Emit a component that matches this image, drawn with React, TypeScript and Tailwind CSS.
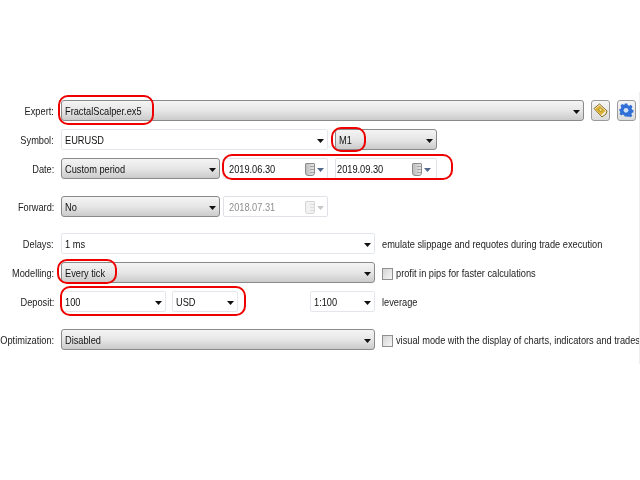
const font = "font-['Liberation_Sans',Arial,sans-serif]";

// the reference is a squeezed screenshot, so the text is narrowed rather than made smaller
function Text({ children, right }: { children: string; right?: boolean }) {
  return (
    <span className={`inline-block pt-[2px] scale-x-[.84] whitespace-nowrap ${right ? "origin-right" : "origin-left"}`}>
      {children}
    </span>
  );
}

function Caret({ color = "#111" }: { color?: string }) {
  return (
    <svg width="7" height="4" viewBox="0 0 7 4" className="shrink-0 mt-[2px]">
      <path d="M0 0h7L3.5 4z" fill={color} />
    </svg>
  );
}

function Label({ children }: { children: string }) {
  return (
    <div className="flex justify-end w-[54px] mr-[7px] shrink-0 text-[#222]">
      <Text right>{children}</Text>
    </div>
  );
}

// grey gradient combo, the read-only kind
function Select({ text, className }: { text: string; className: string }) {
  return (
    <div
      className={`flex shrink-0 items-center justify-between h-[21px] pl-[3px] pr-[3px] rounded-[3px] border border-[#8a8a8a] bg-gradient-to-b from-[#f4f4f4] via-[#e6e6e6] to-[#cbcbcb] text-[#111] ${className}`}
    >
      <Text>{text}</Text>
      <Caret />
    </div>
  );
}

// white editable combo
function Combo({ text, className }: { text: string; className: string }) {
  return (
    <div className={`flex shrink-0 items-center justify-between h-[21px] pl-[3px] pr-[3px] rounded-[2px] border border-[#e3e7ec] bg-white text-[#111] ${className}`}>
      <Text>{text}</Text>
      <Caret />
    </div>
  );
}

function DateBox({ text, disabled, className }: { text: string; disabled?: boolean; className: string }) {
  return (
    <div
      className={`flex shrink-0 items-center justify-between h-[21px] rounded-[2px] border border-[#dfe3e8] bg-white ${disabled ? "text-[#8f8f8f]" : "text-[#111]"} ${className}`}
    >
      <Text>{text}</Text>
      <span className="flex items-center gap-[2px] pt-px">
        <span
          className={`flex flex-col gap-[2px] pt-[2px] px-[4px] w-[10px] h-[13px] rounded-b-[3px] rounded-t-[1px] border ${disabled ? "border-[#d6d6d6] bg-[#f2f2f2]" : "border-[#8c8c8c] bg-gradient-to-r from-[#bdbdbd] to-[#e6e6e6]"}`}
        >
          <span className={`block h-px w-[4px] ${disabled ? "bg-[#dddddd]" : "bg-[#a5a5a5]"}`} />
          <span className={`block h-px w-[4px] ${disabled ? "bg-[#dddddd]" : "bg-[#a5a5a5]"}`} />
          <span className={`block h-px w-[4px] ${disabled ? "bg-[#dddddd]" : "bg-[#a5a5a5]"}`} />
        </span>
        <Caret color={disabled ? "#c8c8c8" : "#54688c"} />
      </span>
    </div>
  );
}

function Check({ text }: { text: string }) {
  return (
    <div className="flex items-center gap-[3px] ml-[7px] text-[#222]">
      <span className="block w-[11px] h-[12px] mt-[2px] border border-[#8e8f8f] bg-gradient-to-br from-[#d4d4d4] to-[#f6f6f6] shrink-0" />
      <Text>{text}</Text>
    </div>
  );
}

function IconButton({ children, className }: { children: React.ReactNode; className: string }) {
  return (
    <div className={`flex shrink-0 items-center justify-center h-[21px] w-[19px] rounded-[3px] border border-[#9a9a9a] bg-gradient-to-b from-[#f6f6f6] to-[#dcdcdc] ${className}`}>
      {children}
    </div>
  );
}

function Ring({ className }: { className: string }) {
  return <div className={`absolute border-[2px] border-[#ee0000] rounded-[10px] ${className}`} />;
}

export default function App() {
  return (
    <div className={`relative w-[640px] h-[480px] overflow-hidden bg-white pt-[100px] text-[11px] leading-none ${font}`}>
      <div className="blur-[0.3px]">
        <div className="flex items-center h-[21px]">
          <Label>Expert:</Label>
          <Select text="FractalScalper.ex5" className="w-[523px]" />
          <IconButton className="ml-[7px]">
            <svg width="15" height="15" viewBox="0 0 15 15">
              <path d="M1 5.500 6.500 1 14 8l-1 3-4 3z" fill="#f3efe0" stroke="#8a6d1c" strokeWidth="1" />
              <path d="M2 6 6.500 2.500 12.500 8 8 12z" fill="#dcb02c" />
              <path d="M5.500 6.500l2-1.500 2 2-2 1.500z" fill="#f7e58c" stroke="#8a6d1c" strokeWidth=".6" />
            </svg>
          </IconButton>
          <IconButton className="ml-[7px]">
            <svg width="15" height="15" viewBox="0 0 15 15">
              <path
                d="M6 1h3l.4 1.800 1.600.7 1.600-1 1.900 2-1 1.600.6 1.600 1.400.3v2.600l-1.600.4-.6 1.500 1 1.600-1.900 1.800-1.600-1-1.600.7L9 15H6l-.4-1.400-1.600-.7-1.600 1-1.900-1.800 1-1.600-.6-1.500L.5 9.600V7l1.400-.3.6-1.600-1-1.600 1.900-2 1.600 1 1.600-.7z"
                transform="scale(.93) translate(0 -.5)"
                fill="#2f6fd6"
              />
              <circle cx="7" cy="7.300" r="2.400" fill="#cfe0f7" />
            </svg>
          </IconButton>
        </div>

        <div className="flex items-center h-[21px] mt-[8px]">
          <Label>Symbol:</Label>
          <Combo text="EURUSD" className="w-[267px]" />
          <Select text="M1" className="w-[102px] ml-[7px]" />
        </div>

        <div className="flex items-center h-[21px] mt-[8px]">
          <Label>Date:</Label>
          <Select text="Custom period" className="w-[159px]" />
          <DateBox text="2019.06.30" className="w-[105px] ml-[3px] pl-[5px] pr-[3px]" />
          <DateBox text="2019.09.30" className="w-[102px] ml-[7px] pl-[1px] pr-[5px]" />
        </div>

        <div className="flex items-center h-[21px] mt-[17px]">
          <Label>Forward:</Label>
          <Select text="No" className="w-[159px]" />
          <DateBox text="2018.07.31" disabled className="w-[105px] ml-[3px] pl-[5px] pr-[3px]" />
        </div>

        <div className="flex items-center h-[21px] mt-[16px]">
          <Label>Delays:</Label>
          <Combo text="1 ms" className="w-[314px]" />
          <span className="ml-[7px] text-[#222]">
            <Text>emulate slippage and requotes during trade execution</Text>
          </span>
        </div>

        <div className="flex items-center h-[21px] mt-[8px]">
          <Label>Modelling:</Label>
          <Select text="Every tick" className="w-[314px]" />
          <Check text="profit in pips for faster calculations" />
        </div>

        <div className="flex items-center h-[21px] mt-[8px]">
          <Label>Deposit:</Label>
          <Combo text="100" className="w-[105px]" />
          <Combo text="USD" className="w-[66px] ml-[6px]" />
          <Combo text="1:100" className="w-[65px] ml-[72px]" />
          <span className="ml-[7px] text-[#222]">
            <Text>leverage</Text>
          </span>
        </div>

        <div className="flex items-center h-[21px] mt-[17px]">
          <Label>Optimization:</Label>
          <Select text="Disabled" className="w-[314px]" />
          <Check text="visual mode with the display of charts, indicators and trades" />
        </div>
      </div>

      <Ring className="left-[58px] top-[95px] w-[96px] h-[30px]" />
      <Ring className="left-[331px] top-[127px] w-[35px] h-[25px]" />
      <Ring className="left-[222px] top-[154px] w-[231px] h-[26px]" />
      <Ring className="left-[57px] top-[259px] w-[60px] h-[25px]" />
      <Ring className="left-[60px] top-[286px] w-[186px] h-[30px]" />
      <div className="absolute right-0 top-[92px] h-[272px] w-px bg-[#eeeeee]" />
    </div>
  );
}
